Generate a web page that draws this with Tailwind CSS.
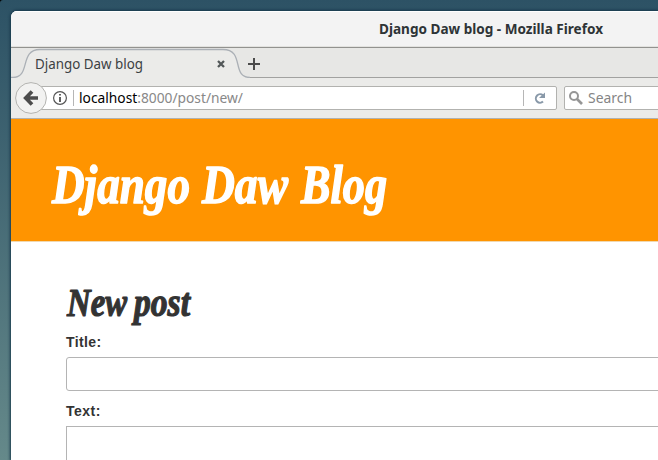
<!DOCTYPE html>
<html lang="en"><head><meta charset="utf-8"><title>Django Daw blog</title>
<script src="https://cdn.jsdelivr.net/npm/@tailwindcss/browser@4"></script></head>
<body class="h-[460px] w-[658px] overflow-hidden bg-black">
<div class="h-full w-full overflow-hidden rounded-tl-[3px] bg-linear-to-b from-[#2d5265] to-[#65898a] pt-[11px] pl-[11px]">
<main class="flex h-[449px] w-[647px] flex-col overflow-hidden rounded-tl-[6px] bg-white shadow-[0_0_3px_1px_#17384b]">
<header class="flex h-[37px] shrink-0 items-center border-b border-[#92928f] bg-[#f3f3f3] pl-[368px] shadow-[inset_0_1px_0_#ffffff,inset_0_-1px_0_#e2e2df]">
<svg class="h-[36px] w-[240px]" aria-label="Window title"><text x="0" y="23" textLength="224" lengthAdjust="spacingAndGlyphs" class="fill-[#2e3436] font-['Noto_Sans',sans-serif] text-[14px] font-bold">Django Daw blog - Mozilla Firefox</text></svg>
</header>
<div class="h-[30px] shrink-0 bg-[#e7e7e5]">
<svg class="block h-[30px] w-[647px]" fill="none">
<path d="M0 29.5H2C20 29.5 8 1.5 29 1.5H212C234 1.5 220 29.5 239 29.5H647V30H0Z" fill="#ebebe9"/>
<path d="M0 29.5H2C20 29.5 8 1.5 29 1.5H212C234 1.5 220 29.5 239 29.5" stroke="#abb0b6" stroke-width="1.3"/>
<path d="M239 29.5H647" stroke="#a2a2a0"/>
<text x="24" y="21" textLength="108" lengthAdjust="spacingAndGlyphs" class="fill-[#3c4143] font-['Noto_Sans',sans-serif] text-[14px]">Django Daw blog</text>
<path d="M207 13l6 6M213 13l-6 6" stroke="#535859" stroke-width="2.3"/>
<path d="M237 16h12M243 10v12" stroke="#4b4b4b" stroke-width="2"/>
</svg></div>
<nav class="flex h-[41px] shrink-0 items-center border-b border-[#b1b1ae] bg-[#ebebe9] pl-1">
<svg class="relative z-10 h-8 w-8 shrink-0" viewBox="0 0 32 32" fill="none"><circle cx="16" cy="16" r="15.4" fill="#f2f2f1" stroke="#b3b3b0"/><path d="M17 9.5l-6.3 6.5 6.3 6.5M11.5 16H23" stroke="#4c4c4c" stroke-width="3.7"/></svg>
<div class="-ml-3 flex h-6 w-[522px] shrink-0 items-center rounded-[2px] border border-[#b2b2af] bg-white">
<svg class="h-[22px] w-[520px]" fill="none"><circle cx="24" cy="11" r="6.4" stroke="#555" stroke-width="1.2"/><path d="M24 10v5M24 7v1.5" stroke="#444" stroke-width="1.7"/><path d="M37.5 3v16M487.5 3v16" stroke="#b6b6b6"/>
<text x="43" y="16" textLength="164" lengthAdjust="spacingAndGlyphs" class="fill-[#888888] font-['Noto_Sans',sans-serif] text-[14px]"><tspan class="fill-black">localhost</tspan>:8000/post/new/</text>
<path d="M507 14.5A4.2 4.2 0 1 1 507 8.5" stroke="#8999a9" stroke-width="2"/><path d="M509 5.5v5.5h-6z" fill="#8999a9"/></svg></div>
<div class="ml-[7px] flex h-6 w-[120px] shrink-0 items-center rounded-[2px] border border-[#b2b2af] bg-white">
<svg class="h-[22px] w-[100px] shrink-0" fill="none"><circle cx="9" cy="9" r="4" stroke="#969696" stroke-width="2"/><path d="M12 12l5 5" stroke="#969696" stroke-width="2.7"/><text x="23" y="16" textLength="44" lengthAdjust="spacingAndGlyphs" class="fill-[#858585] font-['Noto_Sans',sans-serif] text-[14px]">Search</text></svg></div>
</nav>
<section class="h-[123px] shrink-0 border-b border-[#f0d8b0] bg-[#ff9400]">
<h1><svg class="block h-[122px] w-[640px] fill-white stroke-white stroke-[1.5px] font-['Liberation_Serif',serif] text-[54px] font-bold italic" stroke-linejoin="round"><text x="41" y="84" textLength="138" lengthAdjust="spacingAndGlyphs">Django</text><text x="191" y="84" textLength="86" lengthAdjust="spacingAndGlyphs">Daw</text><text x="290" y="84" textLength="86" lengthAdjust="spacingAndGlyphs">Blog</text></svg></h1>
</section>
<form class="flex flex-col pt-[37px] pl-[55px] font-['Liberation_Sans',sans-serif] text-sm leading-5 font-bold text-[#333333]">
<h2><svg class="block h-[53px] w-[300px] fill-[#333333] stroke-[#333333] stroke-[1.2px] font-['Liberation_Serif',serif] text-[39px] font-bold italic" stroke-linejoin="round"><text x="1" y="37" textLength="60" lengthAdjust="spacingAndGlyphs">New</text><text x="68" y="37" textLength="56" lengthAdjust="spacingAndGlyphs">post</text></svg></h2>
<label for="title" class="tracking-[0.4px]">Title:</label>
<input id="title" class="mt-[5px] h-[34px] w-[700px] rounded-[3px] border border-[#b4b4b4] bg-white">
<label for="text" class="mt-[10px] tracking-[0.5px]">Text:</label>
<textarea id="text" class="mt-[5px] h-[100px] w-[700px] border border-[#b4b4b4] bg-white"></textarea>
</form>
</main></div></body></html>
